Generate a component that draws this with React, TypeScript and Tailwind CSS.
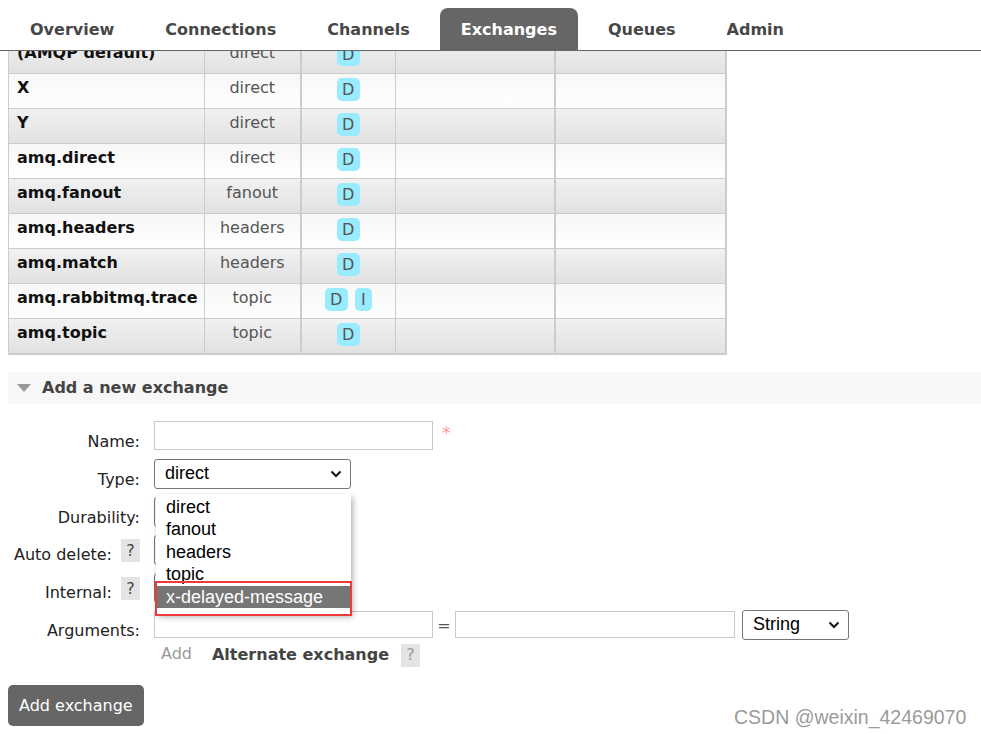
import React from "react";

const verdana = "font-['DejaVu_Sans',Verdana,sans-serif]";
const arial = "font-['Liberation_Sans',Arial,sans-serif]";

const tabs = ["Overview", "Connections", "Channels", "Exchanges", "Queues", "Admin"];

const exchanges = [
  { name: "(AMQP default)", type: "direct", features: ["D"] },
  { name: "X", type: "direct", features: ["D"] },
  { name: "Y", type: "direct", features: ["D"] },
  { name: "amq.direct", type: "direct", features: ["D"] },
  { name: "amq.fanout", type: "fanout", features: ["D"] },
  { name: "amq.headers", type: "headers", features: ["D"] },
  { name: "amq.match", type: "headers", features: ["D"] },
  { name: "amq.rabbitmq.trace", type: "topic", features: ["D", "I"] },
  { name: "amq.topic", type: "topic", features: ["D"] },
];

function Chevron() {
  return (
    <svg width="12" height="8" viewBox="0 0 12 8" className="shrink-0">
      <path d="M1.5 1.5 L6 6 L10.5 1.5" stroke="#111" strokeWidth="2" fill="none" />
    </svg>
  );
}

function FakeSelect({ value, width }: { value: string; width: string }) {
  return (
    <div
      className={`${width} h-[30px] border border-[#767676] rounded-[3px] bg-white flex items-center justify-between pl-[10px] pr-[8px] text-[18px] text-black ${arial}`}
    >
      <span>{value}</span>
      <Chevron />
    </div>
  );
}

// select boxes that sit under the open dropdown, only their left edge shows
function HiddenSelect({ width }: { width: string }) {
  return <div className={`${width} h-[30px] border border-[#767676] rounded-[3px] bg-white`}></div>;
}

function Help({ faded }: { faded?: boolean }) {
  return (
    <span
      className={`inline-flex items-center justify-center w-[19px] h-[23px] bg-[#e4e4e4] text-[16px] ${
        faded ? "text-[#999]" : "text-[#444]"
      }`}
    >
      ?
    </span>
  );
}

function FormRow({ label, help, children }: { label: string; help?: boolean; children: React.ReactNode }) {
  return (
    <div className="flex h-[38px]">
      <div className="w-[140px] flex justify-end items-start gap-[9px] pt-[9px] text-[16px] text-[#222]">
        <span className={help ? "-mt-[1px]" : ""}>{label}</span>
        {help && <span className="-mt-[5px]"><Help /></span>}
      </div>
      <div className="ml-[14px] flex items-start">{children}</div>
    </div>
  );
}

export default function App() {
  return (
    <div className={`relative w-[981px] h-[734px] overflow-hidden bg-white ${verdana}`}>
      {/* Tab bar */}
      <div className="relative z-10 h-[51px] bg-white border-b border-[#666] flex items-end pl-[9px] gap-[9px]">
        {tabs.map((t) => (
          <div
            key={t}
            className={`h-[42px] px-[21px] flex items-center pt-[1px] rounded-t-[8px] text-[16px] font-bold ${
              t === "Exchanges" ? "bg-[#666] text-white" : "text-[#474747]"
            }`}
          >
            {t}
          </div>
        ))}
      </div>

      {/* Exchanges table, scrolled */}
      <div className="ml-[8px] -mt-[13px]">
        <table className="table-fixed border-collapse w-[717px] border-l border-r-2 border-b-2 border-[#ccc]">
          <colgroup>
            <col className="w-[196px]" />
            <col className="w-[96px]" />
            <col className="w-[95px]" />
            <col className="w-[159px]" />
            <col className="w-[171px]" />
          </colgroup>
          <tbody>
            {exchanges.map((ex, i) => (
              <tr
                key={ex.name}
                className={`h-[35px] ${
                  i % 2 === 0
                    ? "bg-gradient-to-b from-[#f1f1f1] to-[#e1e1e1]"
                    : "bg-gradient-to-b from-[#f7f7f7] to-[#ffffff]"
                }`}
              >
                <td className="border-t border-[#ccc] align-top pt-[2px] pl-[8px] text-[16px] font-bold text-[#111] whitespace-nowrap">
                  {ex.name}
                </td>
                <td className="border-t border-l border-[#ccc] align-top pt-[2px] text-center text-[16px] text-[#555]">
                  {ex.type}
                </td>
                <td className="border-t border-l-2 border-[#ccc] align-top pt-[4px]">
                  <div className="flex justify-center gap-[7px]">
                    {ex.features.map((f) => (
                      <span
                        key={f}
                        className={`h-[23px] ${f === "D" ? "w-[23px]" : "w-[17px]"} rounded-[5px] bg-[#99ebff] text-[#555] text-[16px] flex items-center justify-center`}
                      >
                        {f}
                      </span>
                    ))}
                  </div>
                </td>
                <td className="border-t border-l border-[#ccc]"></td>
                <td className="border-t border-l-2 border-[#ccc]"></td>
              </tr>
            ))}
          </tbody>
        </table>
      </div>

      {/* Section header */}
      <div className="ml-[8px] mt-[17px] h-[32px] bg-[#f7f7f7] flex items-center pl-[9px]">
        <svg width="14" height="8" viewBox="0 0 14 8">
          <polygon points="0,0 14,0 7,8" fill="#999" />
        </svg>
        <span className="ml-[11px] text-[16px] font-bold text-[#444]">Add a new exchange</span>
      </div>

      {/* Form */}
      <div className="relative mt-[17px]">
        <FormRow label="Name:">
          <div className="w-[279px] h-[29px] border border-[#c8c8c8] bg-white"></div>
          <span className="ml-[9px] text-[17px] text-[#f99] leading-none mt-[4px]">*</span>
        </FormRow>
        <FormRow label="Type:">
          <FakeSelect value="direct" width="w-[197px]" />
        </FormRow>
        <FormRow label="Durability:">
          <HiddenSelect width="w-[110px]" />
        </FormRow>
        <FormRow label="Auto delete:" help>
          <HiddenSelect width="w-[70px]" />
        </FormRow>
        <FormRow label="Internal:" help>
          <HiddenSelect width="w-[70px]" />
        </FormRow>
        <div className="flex h-[32px]">
          <div className="w-[140px] flex justify-end pt-[8px] text-[16px] text-[#222]">Arguments:</div>
          <div className="ml-[14px] flex items-start">
            <div className="w-[279px] h-[27px] border border-[#c8c8c8] bg-white"></div>
            <span className="w-[22px] text-center text-[16px] text-[#555] pt-[3px]">=</span>
            <div className="w-[280px] h-[27px] border border-[#c8c8c8] bg-white"></div>
            <div className="ml-[7px] -mt-[1px]">
              <FakeSelect value="String" width="w-[107px]" />
            </div>
          </div>
        </div>
        <div className="flex items-center h-[25px] pl-[161px]">
          <span className="text-[16px] text-[#999] -mt-[3px]">Add</span>
          <span className="ml-[20px] text-[16px] font-bold text-[#444]">Alternate exchange</span>
          <span className="ml-[12px]">
            <Help faded />
          </span>
        </div>

        {/* Open dropdown of the Type select */}
        <div className={`absolute left-[156px] top-[73px] w-[195px] bg-white shadow-[2px_3px_6px_rgba(0,0,0,0.3)] pt-[2px] pb-[6px] text-[18px] text-black ${arial}`}>
          {["direct", "fanout", "headers", "topic", "x-delayed-message"].map((o) => (
            <div
              key={o}
              className={`h-[22.5px] leading-[22.5px] pl-[10px] ${
                o === "x-delayed-message" ? "bg-[#767676] text-white" : ""
              }`}
            >
              {o}
            </div>
          ))}
        </div>
        <div className="absolute left-[155px] top-[160px] w-[197px] h-[35px] border-2 border-[#ee3a3a]"></div>
      </div>

      <div className="ml-[8px] mt-[17px] w-[136px] h-[41px] rounded-[5px] bg-[#666] text-white text-[16px] flex items-center pl-[11px] pt-[2px]">
        Add exchange
      </div>

      <div className={`absolute left-[734px] top-[703px] text-[19.5px] text-[#9a9a9a] ${arial}`}>
        CSDN @weixin_42469070
      </div>
    </div>
  );
}
